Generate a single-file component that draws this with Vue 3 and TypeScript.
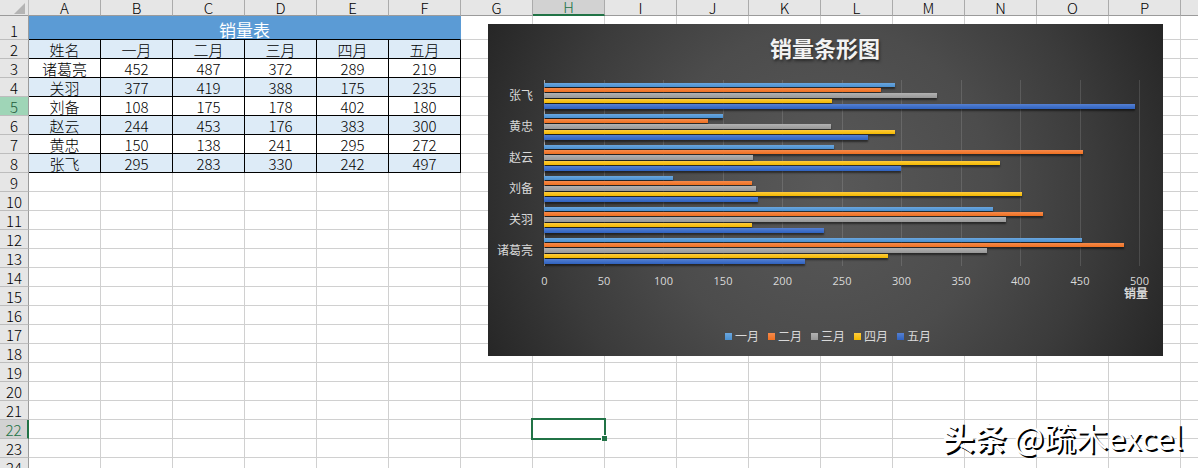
<script setup lang="ts">
interface Person {
  name: string
  sales: number[]
}

const months: string[] = ['一月', '二月', '三月', '四月', '五月']
const monthKeys: string[] = ['m1', 'm2', 'm3', 'm4', 'm5']

const people: Person[] = [
  { name: '诸葛亮', sales: [452, 487, 372, 289, 219] },
  { name: '关羽', sales: [377, 419, 388, 175, 235] },
  { name: '刘备', sales: [108, 175, 178, 402, 180] },
  { name: '赵云', sales: [244, 453, 176, 383, 300] },
  { name: '黄忠', sales: [150, 138, 241, 295, 272] },
  { name: '张飞', sales: [295, 283, 330, 242, 497] },
]

const columns: string[] = 'ABCDEFGHIJKLMNOP'.split('')
const activeColumn = 'H'
const activeRow = 22
const markedRow = 5
const lastRow = 24

const dataRows: (string | number)[][] = [
  ['姓名', ...months],
  ...people.map((p) => [p.name, ...p.sales]),
]

const emptyRows: number[] = Array.from({ length: lastRow - 8 }, (_, i) => i + 9)

const axisMax = 500
const ticks: number[] = Array.from({ length: 11 }, (_, i) => i * 50)
const chartPeople: Person[] = [...people].reverse()

function barWidth(value: number): string {
  return `${(value / axisMax) * 100}%`
}
</script>

<template>
  <main class="workbook">
    <table class="sheet">
      <colgroup>
        <col class="col-head" />
        <col v-for="c in columns" :key="c" class="col-cell" />
        <col />
      </colgroup>
      <thead>
        <tr>
          <th class="corner" aria-label="全选">
            <svg class="corner-mark" viewBox="0 0 11 11" aria-hidden="true"><path d="M11 0V11H0Z" fill="#b4b4b4" /></svg>
          </th>
          <th v-for="c in columns" :key="c" scope="col" :class="{ active: c === activeColumn }">{{ c }}</th>
          <th></th>
        </tr>
      </thead>
      <tbody>
        <tr class="title-row">
          <th scope="row">1</th>
          <td colspan="6" class="title-cell">销量表</td>
          <td v-for="n in 11" :key="n"></td>
        </tr>
        <tr v-for="(row, i) in dataRows" :key="i">
          <th scope="row" :class="{ marked: i + 2 === markedRow }">{{ i + 2 }}</th>
          <td v-for="(v, j) in row" :key="j" class="filled" :class="{ band: i % 2 === 0 && i < 7 }">{{ v }}</td>
          <td v-for="n in 11" :key="n"></td>
        </tr>
        <tr v-for="r in emptyRows" :key="r">
          <th scope="row" :class="{ active: r === activeRow }">{{ r }}</th>
          <td v-for="c in columns" :key="c" :class="{ selected: r === activeRow && c === activeColumn }">
            <span v-if="r === activeRow && c === activeColumn" class="selection"></span>
          </td>
          <td></td>
        </tr>
      </tbody>
    </table>

    <section class="chart" aria-label="销量条形图">
      <h2 class="chart-title">销量条形图</h2>
      <div class="chart-body">
        <div class="names">
          <span v-for="p in chartPeople" :key="p.name">{{ p.name }}</span>
        </div>
        <div class="plot">
          <div class="lines">
            <i v-for="t in ticks" :key="t"></i>
          </div>
          <div class="groups">
            <div v-for="p in chartPeople" :key="p.name" class="group">
              <div
                v-for="(v, k) in p.sales"
                :key="k"
                class="bar"
                :class="monthKeys[k]"
                :style="{ width: barWidth(v) }"
              ></div>
            </div>
          </div>
        </div>
        <div class="ticks">
          <span v-for="t in ticks" :key="t">{{ t }}</span>
        </div>
        <div class="axis-title">销量</div>
      </div>
      <ul class="legend">
        <li v-for="(m, k) in months" :key="m"><i :class="monthKeys[k]"></i>{{ m }}</li>
      </ul>
    </section>

    <p class="watermark"><b>头条</b> @疏木excel</p>
  </main>
</template>

<style>
body {
  margin: 0;
  background: #fff;
}
</style>

<style scoped>
.workbook {
  position: relative;
  height: 100vh;
  overflow: hidden;
  font-family: "Noto Sans CJK SC", "Noto Sans", sans-serif;
  color: #000;
}

.sheet {
  width: 100%;
  table-layout: fixed;
  border-collapse: separate;
  border-spacing: 0;
  font-size: 15px;
  line-height: 16px;
  text-align: center;
}

.col-head {
  width: 29px;
}

.col-cell {
  width: 72px;
}

th,
td {
  box-sizing: border-box;
  height: 19px;
  padding: 2px 0 0;
  border-right: 1px solid #d0d0d0;
  border-bottom: 1px solid #d0d0d0;
  font-weight: 300;
  white-space: nowrap;
}

th {
  background: #e6e6e6;
}

thead th {
  height: 16px;
  padding: 0;
  line-height: 15px;
  border-right-color: #ababab;
  border-bottom-color: #9b9b9b;
}

tbody th {
  border-right-color: #9b9b9b;
  border-bottom-color: #bdbdbd;
}

tr > :last-child {
  border-right: 0;
}

.corner {
  border-right-color: #bdbdbd;
}

.corner-mark {
  display: block;
  width: 11px;
  height: 11px;
  margin: 1px 3px 0 auto;
}

.active {
  background: #d2d2d2;
  color: #217346;
}

thead .active {
  border-bottom: 2px solid #217346;
  line-height: 14px;
}

tbody .active {
  border-right: 2px solid #217346;
}

.marked {
  background: #9fd5b7;
  color: #1e5c3a;
}

.title-row > * {
  height: 24px;
}

.title-row th {
  padding-top: 6px;
}

.title-cell {
  padding-top: 5px;
  border-right-color: #5b9bd5;
  border-bottom-color: #000;
  background: #5b9bd5;
  color: #fff;
  font-size: 17px;
  font-weight: 400;
}

.filled {
  border-right-color: #000;
  border-bottom-color: #000;
}

.band {
  background: #ddebf7;
}

.selected {
  position: relative;
}

.selection {
  position: absolute;
  inset: -2px;
  z-index: 1;
  border: 2px solid #217346;
}

.selection::after {
  content: "";
  position: absolute;
  right: -3px;
  bottom: -3px;
  width: 5px;
  height: 5px;
  border-top: 1px solid #fff;
  border-left: 1px solid #fff;
  background: #217346;
}

.chart {
  position: absolute;
  top: 24px;
  left: 488px;
  box-sizing: border-box;
  width: 675px;
  height: 332px;
  padding: 8px 23px 10px 8px;
  background: radial-gradient(circle, #595959 0%, #4c4c4c 44%, #3b3b3b 72%, #262626 100%);
  color: #d9d9d9;
  font-size: 12px;
  line-height: 16px;
}

.chart-title {
  margin: 0 0 18px;
  padding-left: 14px;
  font-size: 22px;
  line-height: 30px;
  font-weight: 700;
  text-align: center;
  color: #f2f2f2;
  text-shadow: 1px 2px 3px rgba(0, 0, 0, 0.5);
}

.chart-body {
  display: grid;
  grid-template-columns: 37px 1fr;
  column-gap: 11px;
}

.names {
  display: grid;
  grid-template-rows: repeat(6, 31px);
  justify-items: end;
  line-height: 30px;
}

.plot {
  display: grid;
}

.lines,
.groups {
  grid-area: 1 / 1;
}

.lines {
  display: flex;
  justify-content: space-between;
}

.lines i {
  width: 1px;
  background: rgba(255, 255, 255, 0.13);
}

.lines i:first-child {
  background: #a6a6a6;
}

.groups {
  display: grid;
  grid-template-rows: repeat(6, 31px);
  padding-right: 1px;
}

.group {
  display: grid;
  grid-template-rows: 4px 4px 5px 4px 5px;
  row-gap: 1px;
  align-content: start;
  padding-top: 3px;
}

.bar {
  box-shadow: 0 2px 2px rgba(0, 0, 0, 0.5);
}

.m1 {
  background: linear-gradient(#6aa6de, #4a90d0);
}

.m2 {
  background: linear-gradient(#f58a4c, #ef7020);
}

.m3 {
  background: linear-gradient(#b2b2b2, #979797);
}

.m4 {
  background: linear-gradient(#ffcb3c, #f2b800);
}

.m5 {
  background: linear-gradient(#5580d2, #2f62bf);
}

.ticks {
  grid-column: 2;
  display: flex;
  justify-content: space-between;
  padding-top: 7px;
  font-family: "Open Sans", "Noto Sans", sans-serif;
  font-size: 11px;
}

.ticks span {
  display: flex;
  justify-content: center;
  width: 1px;
}

.axis-title {
  grid-column: 2;
  justify-self: end;
  margin: -4px -8px 0 0;
  font-weight: 700;
}

.legend {
  display: flex;
  justify-content: center;
  gap: 9px;
  margin: 27px 0 0;
  padding: 0 0 0 20px;
  list-style: none;
}

.legend li {
  display: flex;
  align-items: center;
  gap: 3px;
}

.legend i {
  width: 7px;
  height: 7px;
}

.watermark {
  position: absolute;
  right: 15px;
  bottom: 12px;
  margin: 0;
  font-size: 32px;
  line-height: 40px;
  color: #fff;
  text-shadow: 2px 2px 0 #000;
}

.watermark b {
  font-weight: 700;
}
</style>
